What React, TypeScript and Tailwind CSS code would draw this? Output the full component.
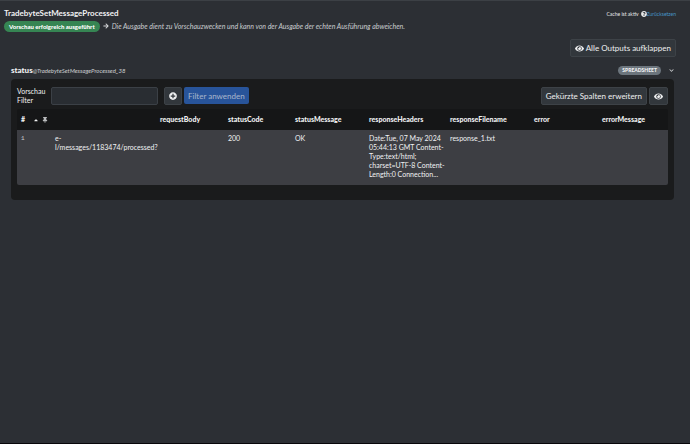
import React from 'react'
import {
  FaArrowRight,
  FaCaretUp,
  FaChevronDown,
  FaEye,
  FaPlusCircle,
  FaQuestionCircle,
  FaThumbtack,
} from 'react-icons/fa'

const columns = [
  { name: '', width: 'w-[105px]' },
  { name: 'requestBody', width: 'w-[68px]' },
  { name: 'statusCode', width: 'w-[67px]' },
  { name: 'statusMessage', width: 'w-[74px]' },
  { name: 'responseHeaders', width: 'w-[81px]' },
  { name: 'responseFilename', width: 'w-[84px]' },
  { name: 'error', width: 'w-[68px]' },
  { name: 'errorMessage', width: 'w-[70px]' },
]

const rows = [
  [
    'e-l/messages/1183474/processed?',
    '',
    '200',
    'OK',
    'Date:Tue, 07 May 2024 05:44:13 GMT Content-Type:text/html; charset=UTF-8 Content-Length:0 Connection...',
    'response_1.txt',
    '',
    '',
  ],
]

const Button: React.FC<React.ButtonHTMLAttributes<HTMLButtonElement>> = ({ children, ...props }) => (
  <button
    type="button"
    className="h-[18px] min-w-[18px] shrink-0 flex items-center justify-center gap-[2px] px-1 rounded-[2px] border border-[#3d4247] bg-[#32373c] text-[8px] text-[#eeeff0] whitespace-nowrap"
    {...props}
  >
    {children}
  </button>
)

const PageHeader: React.FC = () => (
  <header className="flex items-start justify-between pl-1 pr-[14px] pt-[6px]">
    <div>
      <h1 className="text-[8px] leading-[13px] font-bold text-[#f1f2f3]">TradebyteSetMessageProcessed</h1>
      <div className="flex items-center gap-[3px]">
        <span className="h-[11px] px-[5px] rounded-full bg-[#368553] text-[6px] leading-[11px] font-black text-white whitespace-nowrap">
          Vorschau erfolgreich ausgeführt
        </span>
        <FaArrowRight className="w-[6px] h-[6px] text-[#d5d7d9]" />
        <em className="text-[7px] leading-[12px] text-[#c8cbce] whitespace-nowrap">
          Die Ausgabe dient zu Vorschauzwecken und kann von der Ausgabe der echten Ausführung abweichen.
        </em>
      </div>
    </div>
    <div className="flex items-center text-[5px] leading-[14px] text-[#e9eaeb] whitespace-nowrap">
      Cache ist aktiv
      <FaQuestionCircle className="w-[6px] h-[6px] ml-[2px]" />
      <a href="#reset" className="text-[#4796c8]">Zurücksetzen</a>
    </div>
  </header>
)

const FilterBar: React.FC = () => (
  <div className="flex items-center justify-between">
    <div className="flex items-center">
      <label htmlFor="filter" className="w-[34px] text-[7px] leading-[9px]">
        Vorschau Filter
      </label>
      <input
        id="filter"
        type="text"
        className="w-[107px] h-[18px] px-1 mr-[6px] rounded-[2px] border border-[#3b4046] bg-[#292d32] text-[8px]"
      />
      <div className="flex gap-[2px]">
        <Button aria-label="Filter hinzufügen">
          <FaPlusCircle className="w-2 h-2" />
        </Button>
        <button
          type="button"
          className="h-[17px] px-1 rounded-[2px] bg-[#28549a] text-[8px] text-[#a9b6cc] whitespace-nowrap"
        >
          Filter anwenden
        </button>
      </div>
    </div>
    <div className="flex gap-[2px]">
      <Button>Gekürzte Spalten erweitern</Button>
      <Button aria-label="Spalten anzeigen">
        <FaEye className="w-[9px] h-[9px]" />
      </Button>
    </div>
  </div>
)

const OutputTable: React.FC = () => (
  <div className="mt-1 overflow-hidden rounded-[2px]">
    <table className="w-full table-fixed border-collapse text-left text-[7px] leading-[9px]">
      <thead className="bg-[#151617]">
        <tr className="h-[21px]">
          <th className="w-[34px] pl-1 font-black">
            <span className="flex items-center">
              <span className="w-3">#</span>
              <FaCaretUp className="w-[6px] h-[6px] mr-[3px]" />
              <FaThumbtack className="w-[6px] h-[6px] text-[#b9bbbd]" />
            </span>
          </th>
          {columns.map((column) => (
            <th key={column.name} className={`${column.width} pl-1 font-black`}>
              {column.name}
            </th>
          ))}
        </tr>
      </thead>
      <tbody className="bg-[#3d3e43]">
        {rows.map((row, i) => (
          <tr key={i} className="h-[55px] align-top">
            <td className="pl-1 pt-1 font-['Liberation_Mono',monospace] text-[6px] text-[#c9cbcd]">{i + 1}</td>
            {row.map((value, j) => (
              <td key={j} className="pl-1 pt-1">{value}</td>
            ))}
          </tr>
        ))}
      </tbody>
    </table>
  </div>
)

export default function App() {
  return (
    <div className="min-h-screen flex flex-col border-t border-t-[#3c4045] border-b border-b-[#08060a] bg-[#2c2f34] font-['Lato',sans-serif] text-[#f1f2f3]">
      <PageHeader />
      <main className="pl-[11px] pr-4 pt-[7px]">
        <div className="flex justify-end -mr-[2px]">
          <Button>
            <FaEye className="w-[9px] h-[9px]" />
            Alle Outputs aufklappen
          </Button>
        </div>
        <section className="pt-1">
          <div className="h-[18px] flex items-center justify-between">
            <h2 className="flex items-baseline text-[8px] font-black">
              status
              <em className="text-[6px] font-normal text-[#cbced0]">@TradebyteSetMessageProcessed_38</em>
            </h2>
            <div className="flex items-center gap-2">
              <span className="h-[9px] px-1 rounded-full bg-[#6c757d] text-[5px] leading-[9px] font-black">
                SPREADSHEET
              </span>
              <FaChevronDown className="w-[5px] h-[5px] text-[#c9cbcd]" />
            </div>
          </div>
          <div className="px-[6px] pt-2 pb-[15px] rounded-[4px] bg-[#1a1b1c]">
            <FilterBar />
            <OutputTable />
          </div>
        </section>
      </main>
    </div>
  )
}
